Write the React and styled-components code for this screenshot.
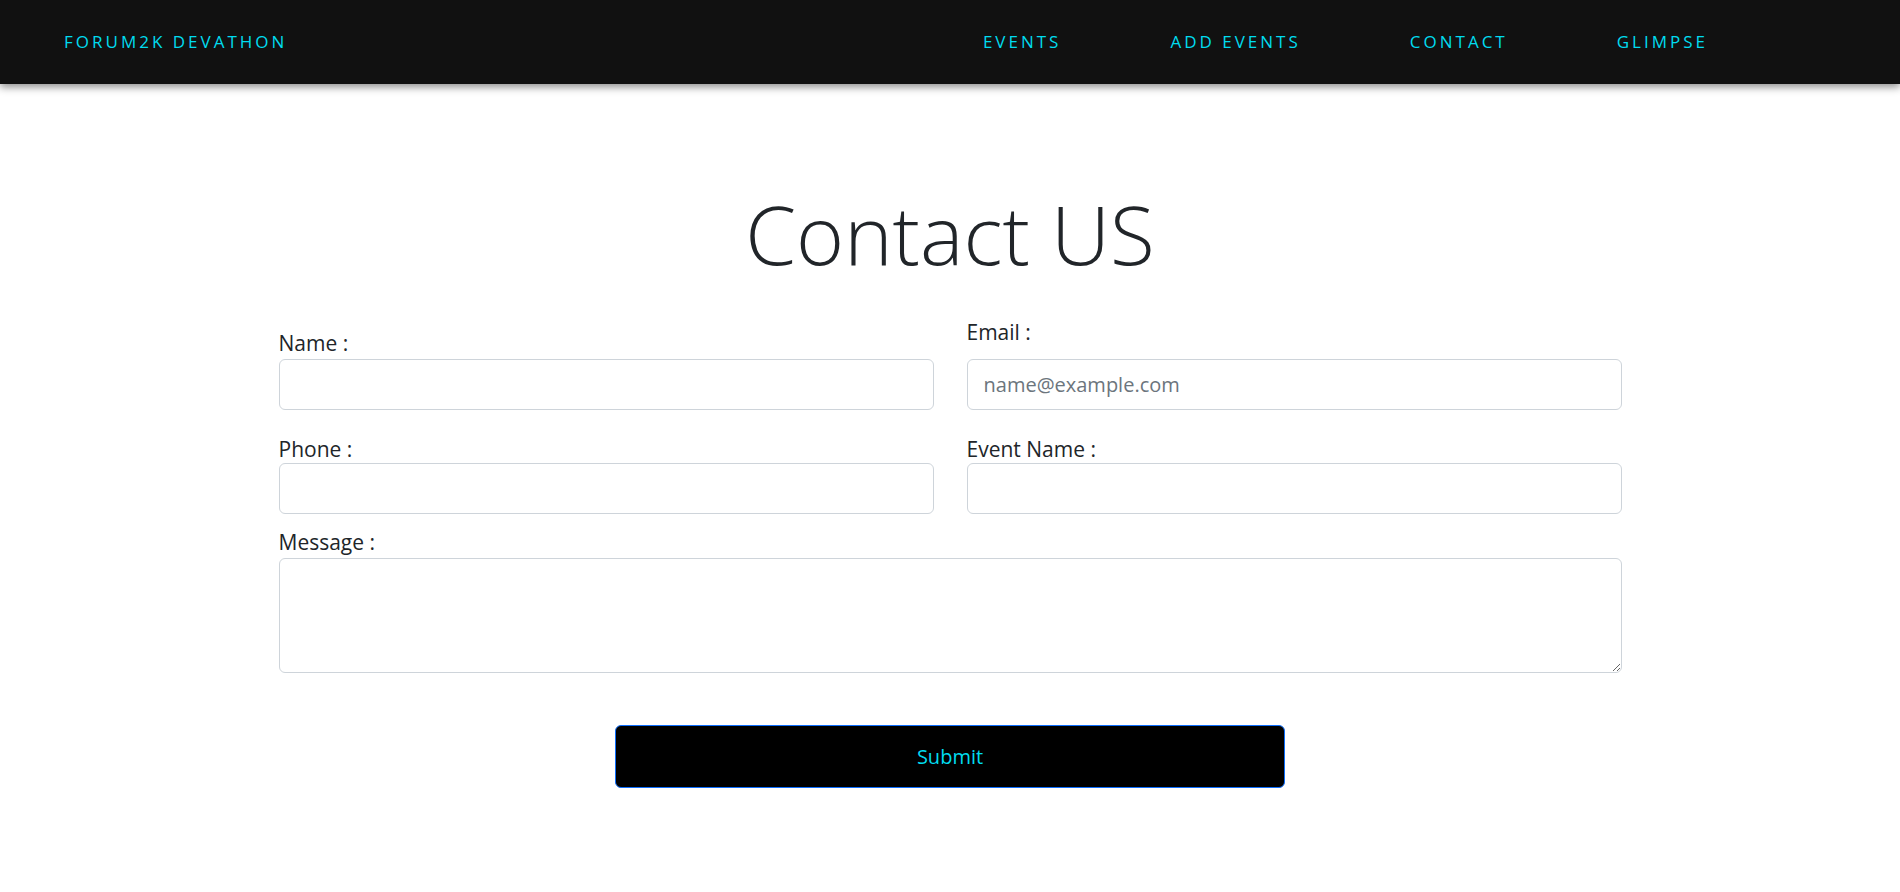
import styled, { createGlobalStyle } from "styled-components";

const GlobalStyle = createGlobalStyle`
  body {
    margin: 0;
    background: #fff;
    font-family: "Open Sans", "Liberation Sans", sans-serif;
    color: #212529;
  }
  * { box-sizing: border-box; }
`;

const Nav = styled.nav`
  height: 84px;
  background-color: #111;
  display: flex;
  align-items: center;
  justify-content: space-between;
  padding: 0 192px 0 64px;
  box-shadow: 0 3px 8px rgba(0, 0, 0, 0.45);
  position: relative; // pour que lombre passe au dessus
`;

const Brand = styled.a`
  color: #00dcef;
  font-size: 17px;
  letter-spacing: 3px;
  text-transform: uppercase;
  font-weight: 400;
  margin-top: -2px;
`;

const Links = styled.ul`
  display: flex;
  gap: 109px;
  list-style: none;
  margin: -2px 0 0;
  padding: 0;

  a {
    color: #00dcef;
    font-size: 17px;
    letter-spacing: 3px;
    text-transform: uppercase;
  }
`;

const Main = styled.main`
  max-width: 1343px;
  margin: 0 auto;
  padding-bottom: 80px;
`;

const Title = styled.h1`
  margin: 100px 0 37px;
  text-align: center;
  font-size: 82px;
  font-weight: 300;
  line-height: 1.2;
  color: #212529;
`;

const Grid = styled.div`
  display: grid;
  grid-template-columns: 1fr 1fr;
  column-gap: 33px;
  row-gap: 26px;
`;

const Field = styled.div`
  display: flex;
  flex-direction: column;
  justify-content: flex-end;
  grid-column: ${(p) => (p.full ? "1 / -1" : "auto")};
  margin-top: ${(p) => (p.full ? "-11px" : "0")};
`;

const Label = styled.label`
  font-size: 21px;
  line-height: 26px;
  color: #212529;
  margin-bottom: ${(p) => p.space || 3}px;
`;

const Input = styled.input`
  height: 51px;
  width: 100%;
  border: 1px solid #ced4da;
  border-radius: 6px;
  padding: 0 16px;
  font-family: inherit;
  font-size: 20px;
  color: #212529;
  outline: none;

  &::placeholder {
    color: #6c757d;
  }
`;

const Message = styled.textarea`
  height: 115px;
  width: 100%;
  border: 1px solid #ced4da;
  border-radius: 6px;
  padding: 8px 16px;
  font-family: inherit;
  font-size: 20px;
  outline: none;
  display: block;
`;

const Submit = styled.button`
  display: block;
  margin: 52px auto 0;
  width: 670px;
  height: 63px;
  background-color: #000;
  color: #00dcef;
  border: 1px solid #0d6efd;
  border-radius: 6px;
  font-family: inherit;
  font-size: 20px;
  cursor: pointer;
`;

const App = () => {
  return (
    <>
      <GlobalStyle />
      <Nav>
        <Brand>Forum2k Devathon</Brand>
        <Links>
          <li><a>Events</a></li>
          <li><a>Add Events</a></li>
          <li><a>Contact</a></li>
          <li><a>Glimpse</a></li>
        </Links>
      </Nav>

      <Main>
        <Title>Contact US</Title>
        <form onSubmit={(e) => e.preventDefault()}>
          <Grid>
            <Field>
              <Label>Name :</Label>
              <Input type="text" />
            </Field>
            <Field>
              <Label space={14}>Email :</Label>
              <Input type="email" placeholder="name@example.com" />
            </Field>
            <Field>
              <Label space={1}>Phone :</Label>
              <Input type="tel" />
            </Field>
            <Field>
              <Label space={1}>Event Name :</Label>
              <Input type="text" />
            </Field>
            <Field full>
              <Label>Message :</Label>
              <Message />
            </Field>
          </Grid>
          <Submit type="submit">Submit</Submit>
        </form>
      </Main>
    </>
  );
};

export default App;
